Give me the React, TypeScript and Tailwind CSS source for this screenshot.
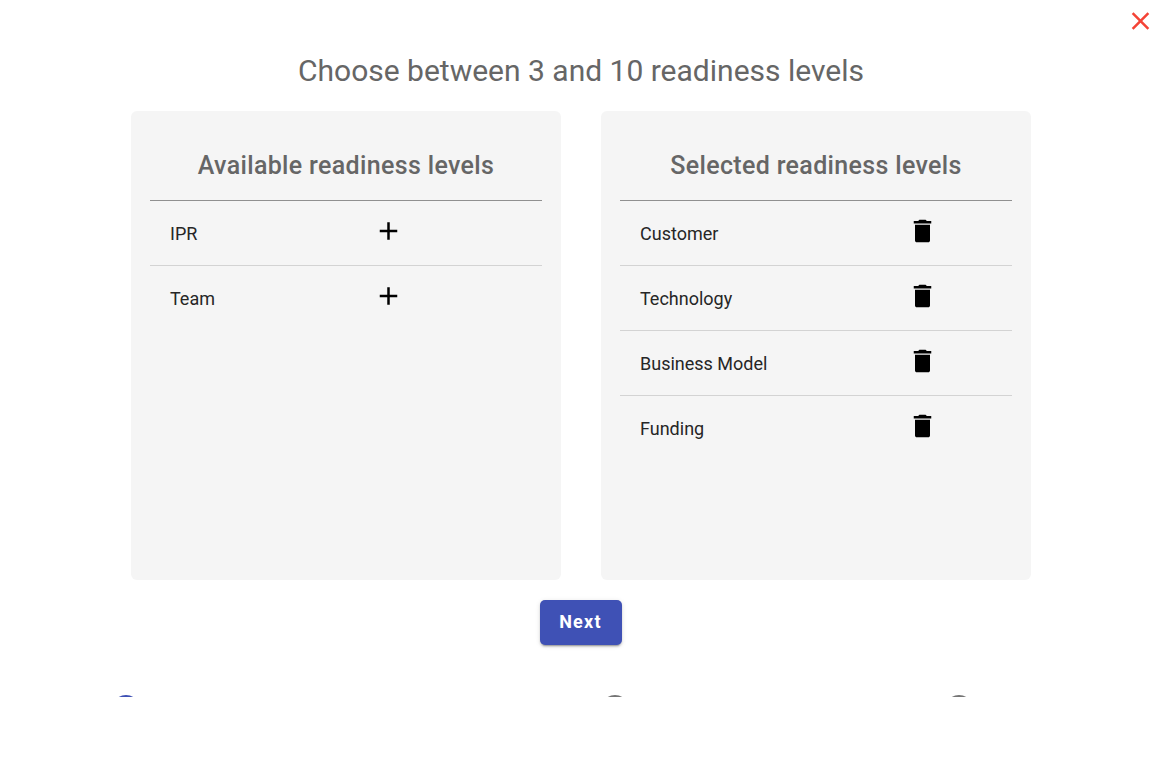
const available = ["IPR", "Team"];
const selected = ["Customer", "Technology", "Business Model", "Funding"];

const plusPath = "M19 13h-6v6h-2v-6H5v-2h6V5h2v6h6v2z";
const trashPath = "M6 19.500c0 .83.67 1.500 1.500 1.500h9c.83 0 1.500-.67 1.500-1.500V7H6v12.500zM19 4h-3.500l-1-1h-5l-1 1H5v2h14V4z";
const closePath = "M19 6.410 17.590 5 12 10.590 6.410 5 5 6.410 10.590 12 5 17.590 6.410 19 12 13.410 17.590 19 19 17.590 13.410 12z";

function Icon({ path, viewBox }: { path: string; viewBox: string }) {
  return (
    <svg viewBox={viewBox} className="size-[30px]" fill="currentColor" aria-hidden="true">
      <path d={path} />
    </svg>
  );
}

function Panel({ title, items, kind }: { title: string; items: string[]; kind: "add" | "remove" }) {
  return (
    <section className="h-[469px] w-[430px] rounded-md bg-[#f5f5f5] px-[19px] pt-[30px]">
      <h2 className="flex h-[60px] items-start justify-center border-b border-[#909090] pt-[9px] text-[25px] leading-[32px] font-medium tracking-[0.34px] text-[#666]">
        {title}
      </h2>
      <ul>
        {items.map((item) => (
          <li key={item} className="flex h-[65px] items-start border-b border-[#d3d3d3] pl-5 last:border-b-0">
            <span className={kind === "add" ? "w-[204px] pt-[21px] text-[18px] leading-6 text-[#262626]" : "w-[267px] pt-[21px] text-[18px] leading-6 text-[#262626]"}>
              {item}
            </span>
            <button type="button" aria-label={kind === "add" ? "Add" : "Remove"} className="mt-[15px] text-black">
              {kind === "add" ? <Icon path={plusPath} viewBox="0.4 0 24 24" /> : <Icon path={trashPath} viewBox="-0.4 0 24 24" />}
            </button>
          </li>
        ))}
      </ul>
    </section>
  );
}

export default function App() {
  return (
    <main className="h-[777px] w-[1168px] overflow-hidden bg-white font-[Roboto,sans-serif]">
      <header className="flex h-[42px] justify-end pr-[13px] pt-[6px]">
        <button type="button" aria-label="Close" className="size-[30px] text-[#f44336]">
          <Icon path={closePath} viewBox="-0.4 0 24 24" />
        </button>
      </header>
      <div className="flex w-[1162px] flex-col items-center">
        <h1 className="h-[69px] pt-[9px] text-[30px] leading-[40px] text-[#666]">Choose between 3 and 10 readiness levels</h1>
        <div className="flex gap-10">
          <Panel title="Available readiness levels" items={available} kind="add" />
          <Panel title="Selected readiness levels" items={selected} kind="remove" />
        </div>
        <button type="button" className="mt-5 h-[45px] w-[82px] rounded-[5px] bg-[#3f51b5] pr-[7px] pb-[2px] text-[18px] font-bold tracking-[1.25px] text-white shadow-[0_3px_1px_-2px_rgba(0,0,0,.2),0_2px_2px_rgba(0,0,0,.14),0_1px_5px_rgba(0,0,0,.12)] pl-[6px]">
          Next
        </button>
      </div>
      <div className="mt-[50px] flex h-[2px] overflow-hidden pl-[112px]">
        <span className="mr-[461px] size-7 shrink-0 rounded-full bg-[#3f51b5]" />
        <span className="mr-[316px] size-7 shrink-0 rounded-full bg-[#757575]" />
        <span className="size-7 shrink-0 rounded-full bg-[#757575]" />
      </div>
    </main>
  );
}
